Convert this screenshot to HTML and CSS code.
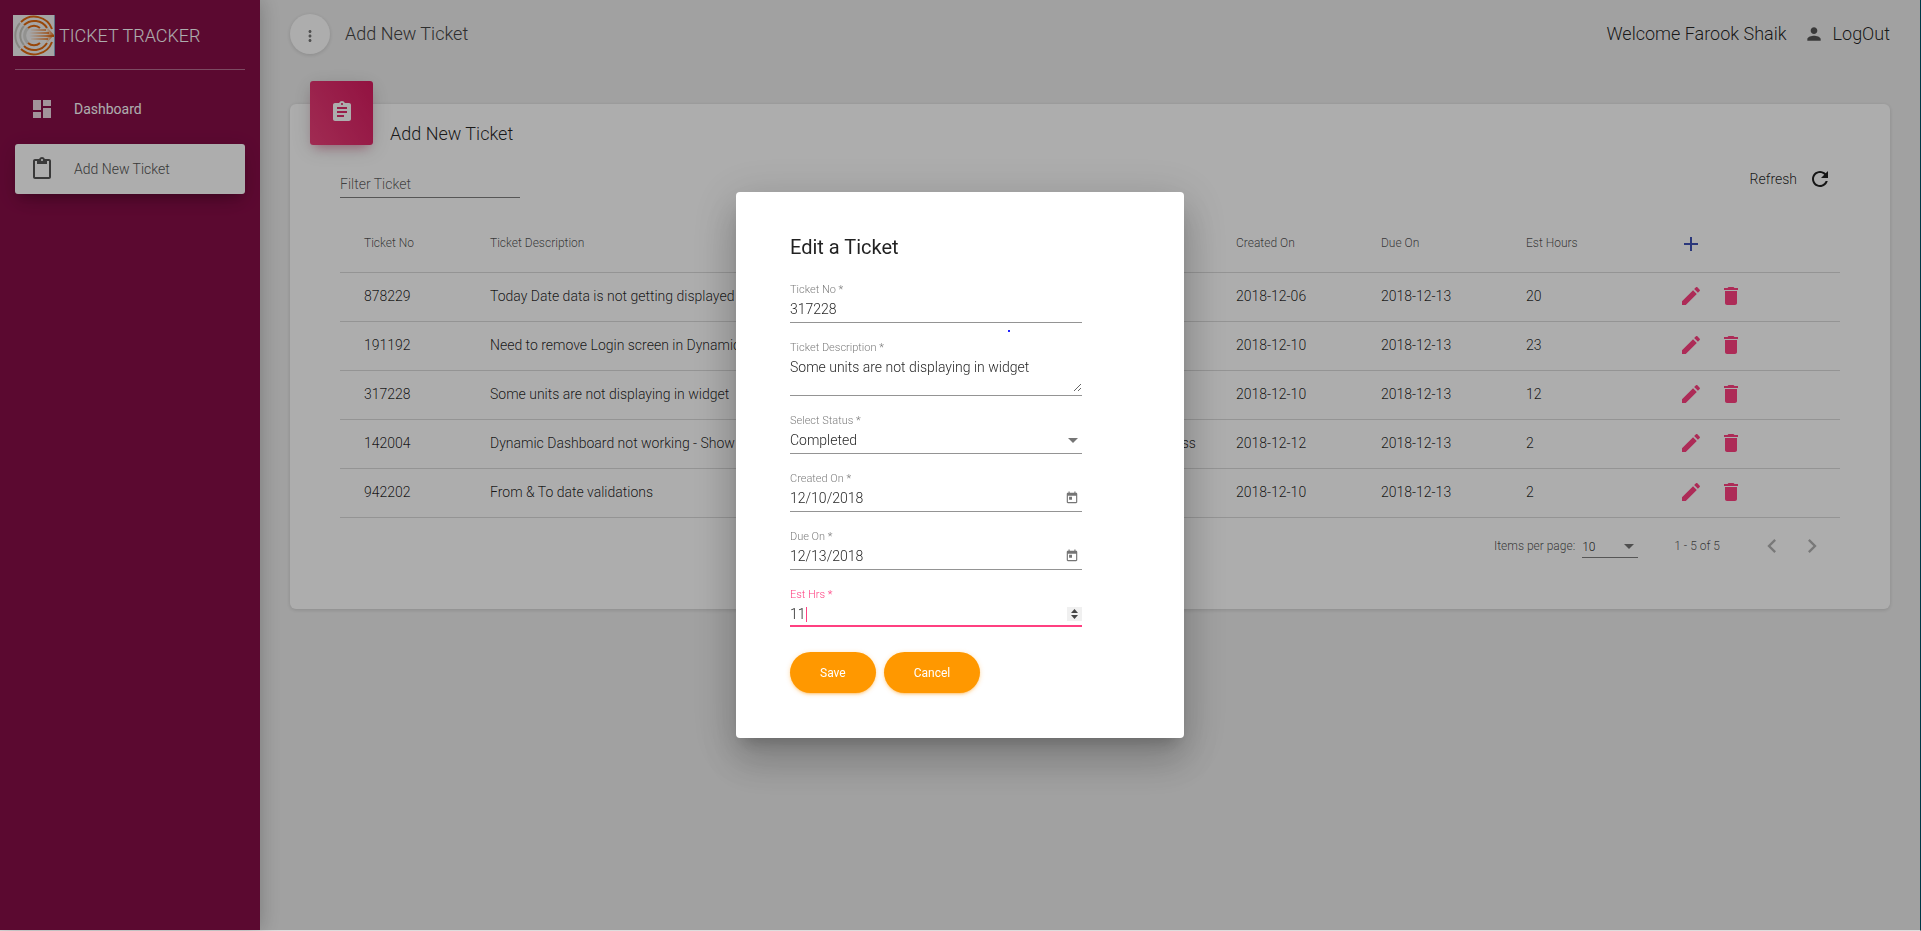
FILE: index.html
```html
<!DOCTYPE html>
<html lang="en">
<head>
<meta charset="utf-8">
<title>Ticket Tracker</title>
<link rel="stylesheet" href="styles.css">
</head>
<body>
<svg class="sprite" aria-hidden="true">
  <symbol id="i-edit" viewBox="0 0 24 24"><path d="M3 17.25V21h3.75L17.81 9.94l-3.75-3.75L3 17.25zM20.71 7.04c.39-.39.39-1.02 0-1.41l-2.34-2.34c-.39-.39-1.02-.39-1.41 0l-1.83 1.83 3.75 3.75 1.83-1.83z"/></symbol>
  <symbol id="i-delete" viewBox="0 0 24 24"><path d="M6 19c0 1.1.9 2 2 2h8c1.1 0 2-.9 2-2V7H6v12zM19 4h-3.5l-1-1h-5l-1 1H5v2h14V4z"/></symbol>
  <symbol id="i-today" viewBox="0 0 24 24"><path d="M19 3h-1V1h-2v2H8V1H6v2H5c-1.11 0-1.99.9-1.99 2L3 19c0 1.1.89 2 2 2h14c1.1 0 2-.9 2-2V5c0-1.1-.9-2-2-2zm0 16H5V8h14v11zM7 10h5v5H7z"/></symbol>
</svg>
<div class="app">
  <aside class="sidebar">
    <a class="brand" href="#">
      <svg class="brand-logo" viewBox="0 0 42 41" aria-hidden="true">
        <defs><linearGradient id="fade"><stop offset="0" stop-color="#f07a1c" stop-opacity="0"/><stop offset="1" stop-color="#e0640c"/></linearGradient></defs>
        <rect width="42" height="41" fill="#f4f4f4"/>
        <rect x="41" width="1" height="41" fill="#8aa8c8"/>
        <g fill="none" stroke-width="2">
          <path stroke="#c8c8c0" d="M7 8A19 19 0 0 0 7 33M11 11A14 14 0 0 0 11 30" />
          <path stroke="#d8d8d4" stroke-width="3" d="M15 13A10 10 0 0 0 15 28"/>
          <path stroke="#e0690f" d="M8 7A19 19 0 0 1 39 14M8 34A19 19 0 0 0 39 27M11 10A15 15 0 0 1 34 13M11 31A15 15 0 0 0 34 28M15 13A9 9 0 0 1 27 13M15 28A9 9 0 0 0 27 28"/>
        </g>
        <g fill="url(#fade)"><path d="M18 14h15v2H18zM16 17h20v2H16zM16 20h25v2H16zM18 23h17v2H18z"/><path d="M33 11l8 9-8 9z"/></g>
      </svg>
      <span>TICKET TRACKER</span>
    </a>
    <nav class="nav">
      <a class="nav-item" href="#">
        <svg class="icon" viewBox="0 0 24 24"><path d="M3 13h8V3H3v10zm0 8h8v-6H3v6zm10 0h8V11h-8v10zm0-18v6h8V3h-8z"/></svg>
        <span>Dashboard</span>
      </a>
      <a class="nav-item active" href="#">
        <svg class="icon" viewBox="0 0 24 24"><path d="M19 2h-4.18C14.4.84 13.3 0 12 0c-1.300 0-2.400.84-2.820 2H5c-1.100 0-2 .9-2 2v16c0 1.100.9 2 2 2h14c1.100 0 2-.9 2-2V4c0-1.100-.9-2-2-2zm-7 0c.55 0 1 .45 1 1s-.45 1-1 1-1-.45-1-1 .45-1 1-1zm7 18H5V4h2v3h10V4h2v16z"/></svg>
        <span>Add New Ticket</span>
      </a>
    </nav>
  </aside>
  <main class="main">
    <header class="topbar">
      <button class="round" type="button" aria-label="More">
        <svg viewBox="0 0 24 24"><path d="M12 8c1.100 0 2-.9 2-2s-.9-2-2-2-2 .9-2 2 .9 2 2 2zm0 2c-1.100 0-2 .9-2 2s.9 2 2 2 2-.9 2-2-.9-2-2-2zm0 6c-1.100 0-2 .9-2 2s.9 2 2 2 2-.9 2-2-.9-2-2-2z"/></svg>
      </button>
      <span class="page-title">Add New Ticket</span>
      <span class="welcome">Welcome Farook Shaik</span>
      <a class="logout" href="#">
        <svg viewBox="0 0 24 24"><path d="M12 12c2.210 0 4-1.790 4-4s-1.790-4-4-4-4 1.790-4 4 1.790 4 4 4zm0 2c-2.670 0-8 1.340-8 4v2h16v-2c0-2.660-5.330-4-8-4z"/></svg>
        <span>LogOut</span>
      </a>
    </header>
    <section class="card">
      <div class="card-head">
        <div class="tile">
          <svg class="icon" viewBox="0 0 24 24"><path d="M19 3h-4.180C14.400 1.840 13.300 1 12 1c-1.300 0-2.400.84-2.820 2H5c-1.100 0-2 .9-2 2v14c0 1.100.9 2 2 2h14c1.100 0 2-.9 2-2V5c0-1.100-.9-2-2-2zm-7 0c.55 0 1 .45 1 1s-.45 1-1 1-1-.45-1-1 .45-1 1-1zm2 14H7v-2h7v2zm3-4H7v-2h10v2zm0-4H7V7h10v2z"/></svg>
        </div>
        <h4>Add New Ticket</h4>
      </div>
      <div class="tools">
        <input class="filter" type="text" placeholder="Filter Ticket" aria-label="Filter Ticket">
        <button class="refresh" type="button">
          <span>Refresh</span>
          <svg class="icon" viewBox="0 0 24 24"><path d="M17.650 6.350C16.200 4.900 14.210 4 12 4c-4.420 0-7.990 3.580-7.990 8s3.570 8 7.990 8c3.730 0 6.840-2.550 7.730-6h-2.080c-.82 2.330-3.040 4-5.650 4-3.310 0-6-2.690-6-6s2.690-6 6-6c1.660 0 3.140.69 4.220 1.780L13 11h7V4l-2.350 2.350z"/></svg>
        </button>
      </div>
      <table class="tickets">
        <colgroup><col class="c-no"><col><col class="c-std"><col class="c-std"><col class="c-std"><col class="c-std"><col class="c-act"></colgroup>
        <thead>
          <tr><th>Ticket No</th><th>Ticket Description</th><th>Status</th><th>Created On</th><th>Due On</th><th>Est Hours</th>
          <th><button class="ib add" type="button" aria-label="Add"><svg class="icon" viewBox="0 0 24 24"><path d="M19 13h-6v6h-2v-6H5v-2h6V5h2v6h6v2z"/></svg></button></th></tr>
        </thead>
        <tbody>
          <tr><td>878229</td><td>Today Date data is not getting displayed</td><td>Completed</td><td>2018-12-06</td><td>2018-12-13</td><td>20</td><td><button class="ib" type="button" aria-label="Edit"><svg class="icon"><use href="#i-edit"/></svg></button><button class="ib" type="button" aria-label="Delete"><svg class="icon"><use href="#i-delete"/></svg></button></td></tr>
          <tr><td>191192</td><td>Need to remove Login screen in Dynamic</td><td>Completed</td><td>2018-12-10</td><td>2018-12-13</td><td>23</td><td><button class="ib" type="button" aria-label="Edit"><svg class="icon"><use href="#i-edit"/></svg></button><button class="ib" type="button" aria-label="Delete"><svg class="icon"><use href="#i-delete"/></svg></button></td></tr>
          <tr><td>317228</td><td>Some units are not displaying in widget</td><td>Completed</td><td>2018-12-10</td><td>2018-12-13</td><td>12</td><td><button class="ib" type="button" aria-label="Edit"><svg class="icon"><use href="#i-edit"/></svg></button><button class="ib" type="button" aria-label="Delete"><svg class="icon"><use href="#i-delete"/></svg></button></td></tr>
          <tr><td>142004</td><td>Dynamic Dashboard not working - Show</td><td>Work In Progress</td><td>2018-12-12</td><td>2018-12-13</td><td>2</td><td><button class="ib" type="button" aria-label="Edit"><svg class="icon"><use href="#i-edit"/></svg></button><button class="ib" type="button" aria-label="Delete"><svg class="icon"><use href="#i-delete"/></svg></button></td></tr>
          <tr><td>942202</td><td>From &amp; To date validations</td><td>Completed</td><td>2018-12-10</td><td>2018-12-13</td><td>2</td><td><button class="ib" type="button" aria-label="Edit"><svg class="icon"><use href="#i-edit"/></svg></button><button class="ib" type="button" aria-label="Delete"><svg class="icon"><use href="#i-delete"/></svg></button></td></tr>
        </tbody>
      </table>
      <div class="paginator">
        <label for="size">Items per page:</label>
        <div class="size-box">
          <select id="size"><option>10</option></select>
          <svg class="caret-down" viewBox="0 0 10 5"><path d="M0 0h10L5 5z"/></svg>
        </div>
        <span class="range">1 - 5 of 5</span>
        <button class="ib page" type="button" aria-label="Previous page" disabled><svg viewBox="0 0 24 24"><path d="M15.410 7.410L14 6l-6 6 6 6 1.410-1.410L10.830 12z"/></svg></button>
        <button class="ib page" type="button" aria-label="Next page" disabled><svg viewBox="0 0 24 24"><path d="M10 6L8.590 7.410 13.170 12l-4.580 4.590L10 18l6-6z"/></svg></button>
      </div>
    </section>
  </main>
</div>
<div class="overlay">
  <form class="dialog" role="dialog" aria-labelledby="dlg-title">
    <h2 id="dlg-title">Edit a Ticket</h2>
    <div class="field">
      <label for="no">Ticket No *</label>
      <div class="control"><input id="no" type="text" value="317228"></div>
      <span class="dot"></span>
    </div>
    <div class="field">
      <label for="desc">Ticket Description *</label>
      <div class="control"><textarea id="desc">Some units are not displaying in widget</textarea></div>
    </div>
    <div class="field">
      <label for="status">Select Status *</label>
      <div class="control"><select id="status"><option>Completed</option></select><svg class="caret-down" viewBox="0 0 10 5"><path d="M0 0h10L5 5z"/></svg></div>
    </div>
    <div class="field">
      <label for="created">Created On *</label>
      <div class="control"><input id="created" type="text" value="12/10/2018"><button class="cal" type="button" aria-label="Open calendar"><svg><use href="#i-today"/></svg></button></div>
    </div>
    <div class="field">
      <label for="due">Due On *</label>
      <div class="control"><input id="due" type="text" value="12/13/2018"><button class="cal" type="button" aria-label="Open calendar"><svg><use href="#i-today"/></svg></button></div>
    </div>
    <div class="field focused">
      <label for="hrs">Est Hrs *</label>
      <div class="control"><input id="hrs" type="number" value="11"><span class="cursor"></span><svg class="spin" viewBox="0 0 15 14"><rect width="15" height="14" fill="#f0f0f0"/><path fill="#444" d="M4 6h7L7.500 2zM4 8h7l-3.500 4z"/></svg></div>
    </div>
    <div class="actions">
      <button class="btn" type="button">Save</button>
      <button class="btn" type="button">Cancel</button>
    </div>
  </form>
</div>
</body>
</html>
```
FILE: styles.css
```css
* { box-sizing: border-box; }

body {
  margin: 0;
  font-family: Roboto, "Liberation Sans", sans-serif;
  font-size: 14px;
  font-weight: 300;
  line-height: 20px;
  color: rgba(0, 0, 0, .87);
  background: #eee;
}

button, input, select, textarea {
  font: inherit;
  color: inherit;
  border: 0;
  padding: 0;
  margin: 0;
  background: none;
  outline: 0;
  border-radius: 0;
}
select { appearance: none; }
a { color: inherit; text-decoration: none; }
svg { display: block; fill: currentColor; flex: none; }
.sprite { position: absolute; width: 0; height: 0; }
.icon { width: 24px; height: 24px; }

.app {
  display: flex;
  min-height: 100vh;
  border-right: 1px solid #003848;
  border-bottom: 1px solid #ddd;
}

/* Sidebar */
.sidebar {
  flex: none;
  width: 260px;
  padding: 0 15px;
  background: #870e48;
  color: #fff;
  box-shadow: 0 0 20px rgba(0, 0, 0, .25);
  z-index: 1;
}
.brand {
  display: flex;
  align-items: center;
  gap: 4px;
  height: 70px;
  margin-bottom: 14px;
  padding-top: 2px;
  border-bottom: 1px solid rgba(255, 255, 255, .4);
  font-size: 18px;
}
.brand-logo { width: 42px; height: 41px; margin-left: -2px; }
.nav { display: flex; flex-direction: column; gap: 10px; }
.nav-item {
  display: flex;
  align-items: center;
  gap: 20px;
  height: 50px;
  padding: 0 15px;
  border-radius: 3px;
  font-weight: 400;
}
.nav-item .icon { opacity: .85; }
.nav-item.active {
  background: #fff;
  color: #555;
  font-weight: 300;
  box-shadow: 0 12px 20px -10px rgba(0, 0, 0, .2), 0 4px 20px rgba(0, 0, 0, .12), 0 7px 8px -5px rgba(0, 0, 0, .15);
}
.nav-item.active .icon { opacity: 1; color: #555; }

/* Top bar */
.main { flex: 1; min-width: 0; padding: 14px 30px; }
.topbar {
  display: flex;
  align-items: center;
  height: 40px;
  margin-bottom: 50px;
  font-size: 18px;
}
.round {
  display: flex;
  align-items: center;
  justify-content: center;
  width: 40px;
  height: 40px;
  padding-top: 4px;
  border-radius: 50%;
  background: #fff;
  color: #777;
  box-shadow: 0 1px 4px rgba(0, 0, 0, .14);
}
.round svg { width: 18px; height: 18px; }
.page-title { margin-left: 15px; color: #444; }
.welcome { margin-left: auto; }
.logout { display: flex; align-items: center; gap: 9px; margin-left: 17px; }
.logout svg { width: 20px; height: 20px; color: #555; }

/* Card */
.card {
  padding: 0 50px 38px;
  border-radius: 6px;
  background: #fff;
  box-shadow: 0 1px 4px rgba(0, 0, 0, .14);
}
.card-head { display: flex; gap: 17px; height: 41px; margin-left: -30px; }
.tile {
  display: flex;
  align-items: center;
  justify-content: center;
  width: 63px;
  height: 64px;
  margin-top: -23px;
  padding-bottom: 2px;
  border-radius: 3px;
  background: linear-gradient(60deg, #ec407a, #d81b60);
  color: #fff;
  box-shadow: 0 4px 20px rgba(0, 0, 0, .14), 0 7px 10px -5px rgba(233, 30, 99, .4);
}
.card-head h4 { margin: 20px 0 0; font-size: 18px; font-weight: 300; line-height: 20px; }
.tools {
  display: flex;
  justify-content: space-between;
  align-items: flex-start;
  height: 71px;
  padding-top: 22px;
}
.filter {
  width: 180px;
  height: 31px;
  padding-top: 4px;
  border-bottom: 1px solid rgba(0, 0, 0, .5);
}
.filter::placeholder { color: rgba(0, 0, 0, .65); opacity: 1; }
.refresh { display: flex; align-items: center; gap: 11px; margin-right: 8px; }

.tickets { width: 100%; border-collapse: collapse; table-layout: fixed; }
.c-no { width: 150px; }
.c-std { width: 145px; }
.c-act { width: 169px; }
.tickets th, .tickets td { padding: 0; text-align: left; border-bottom: 1px solid rgba(0, 0, 0, .14); }
.tickets th { height: 56px; font-size: 12px; font-weight: 300; color: rgba(0, 0, 0, .7); padding-bottom: 2px; }
.tickets td { height: 49px; padding-bottom: 1px; }
.tickets th:first-child, .tickets td:first-child { padding-left: 24px; }
.ib {
  display: inline-flex;
  align-items: center;
  justify-content: center;
  width: 40px;
  height: 40px;
  vertical-align: middle;
  color: #ff4081;
}
.ib.add { color: #3f51b5; padding-top: 2px; }

.paginator {
  display: flex;
  align-items: center;
  justify-content: flex-end;
  height: 49px;
  margin-top: 4px;
  padding-right: 8px;
  font-size: 12px;
  color: rgba(0, 0, 0, .7);
}
.size-box {
  display: flex;
  align-items: center;
  width: 56px;
  margin: 2px 36px 0 7px;
  padding-right: 4px;
  border-bottom: 1px solid rgba(0, 0, 0, .5);
}
.size-box select { flex: 1; min-width: 0; color: rgba(0, 0, 0, .87); }
.caret-down { width: 10px; height: 5px; color: rgba(0, 0, 0, .54); }
.range { margin-right: 32px; }
.ib.page { color: rgba(0, 0, 0, .3); }
.ib.page svg { width: 28px; height: 28px; }

/* Dialog */
.overlay {
  position: fixed;
  inset: 0 1px 1px 0;
  z-index: 10;
  display: flex;
  align-items: center;
  justify-content: center;
  background: rgba(0, 0, 0, .32);
}
.dialog {
  width: 448px;
  padding: 45px 102px 45px 54px;
  border-radius: 4px;
  background: #fff;
  box-shadow: 0 11px 15px -7px rgba(0, 0, 0, .2), 0 24px 38px 3px rgba(0, 0, 0, .14), 0 9px 46px 8px rgba(0, 0, 0, .12);
}
.dialog h2 { margin: 0 0 25px; font-size: 20px; font-weight: 400; line-height: 20px; }
.field { position: relative; display: flex; flex-direction: column; gap: 2px; margin-bottom: 17px; }
.field label { font-size: 11px; line-height: 15px; color: rgba(0, 0, 0, .54); }
.control {
  display: flex;
  align-items: center;
  padding-bottom: 3px;
  border-bottom: 1px solid rgba(0, 0, 0, .42);
}
.control input, .control select, .control textarea { flex: 1; min-width: 0; height: 20px; line-height: 20px; }
.control textarea { height: 35px; resize: vertical; }
.control .caret-down { margin-right: 4px; }
.cal { margin-right: 3px; color: rgba(0, 0, 0, .54); }
.cal svg { width: 14px; height: 14px; }
.dot {
  position: absolute;
  left: 218px;
  top: 48px;
  width: 2px;
  height: 2px;
  background: #22f;
}
.field.focused label { color: #ff4081; }
.field.focused .control { padding-bottom: 1px; border-bottom: 2px solid #ff4081; }
.field.focused input { flex: none; width: 16px; appearance: textfield; }
.field.focused input::-webkit-inner-spin-button { display: none; }
.cursor { width: 1px; height: 15px; background: #ff4081; }
.spin { width: 15px; height: 14px; margin-left: auto; }
.actions { display: flex; gap: 8px; padding-top: 8px; }
.btn {
  height: 41px;
  padding: 0 30px;
  border-radius: 30px;
  background: #ff9800;
  color: #fff;
  font-size: 12px;
  font-weight: 400;
  box-shadow: 0 2px 2px rgba(255, 152, 0, .14), 0 3px 1px -2px rgba(255, 152, 0, .2), 0 1px 5px rgba(255, 152, 0, .3);
}
```
